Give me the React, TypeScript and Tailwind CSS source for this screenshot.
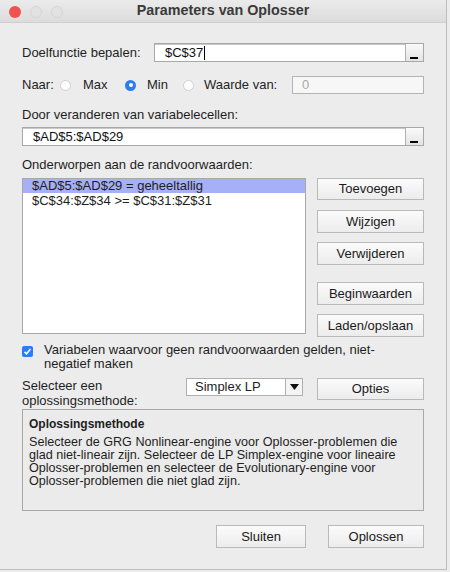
import React from "react";

const font = { fontFamily: '"Liberation Sans", Arial, sans-serif' };

function Btn({ label, className = "" }: { label: string; className?: string }) {
  return (
    <div
      className={`flex items-center justify-center border border-[#b9b9b9] bg-gradient-to-b from-[#fbfbfb] to-[#ececec] text-[13px] text-[#1a1a1a] ${className}`}
    >
      {label}
    </div>
  );
}

function RefInput({ value, cursor = false }: { value: string; cursor?: boolean }) {
  return (
    <div className="flex h-[19px] flex-1 border border-[#a8a8a8] bg-white shadow-[inset_0_1px_0_#c8c8c8]">
      <div className="flex flex-1 items-center pl-[10px] text-[13px] text-[#111]">
        {value}
        {cursor && <span className="ml-[1px] inline-block h-[14px] w-[1px] bg-black" />}
      </div>
      <div className="relative w-[18px] border-l border-[#b0b0b0] bg-gradient-to-b from-[#fafafa] to-[#e4e4e4]">
        <span className="absolute bottom-[2px] left-[4px] h-[2px] w-[8px] bg-black" />
      </div>
    </div>
  );
}

function Radio({ checked = false }: { checked?: boolean }) {
  return checked ? (
    <span className="flex h-[11px] w-[11px] shrink-0 items-center justify-center rounded-full bg-[#2a7df6]">
      <span className="h-[4px] w-[4px] rounded-full bg-white" />
    </span>
  ) : (
    <span className="h-[11px] w-[11px] shrink-0 rounded-full border border-[#d0d0d0] bg-[#fdfdfd]" />
  );
}

export default function App() {
  return (
    <div className="h-[572px] w-[450px] bg-[#ececec]" style={font}>
      <div className="h-[570px] w-[447px] border-r border-b border-[#bdbdbd] bg-[#ececec]">
        {/* Title bar */}
        <div className="relative flex h-[23px] items-center justify-center border-b border-[#cfcfcf] bg-gradient-to-b from-[#ebebeb] to-[#dcdcdc]">
          <div className="absolute left-[9px] top-[6px] flex gap-[9px]">
            <span className="h-[12px] w-[12px] rounded-full bg-[#f0524f]" />
            <span className="h-[12px] w-[12px] rounded-full border border-[#d6d6d6] bg-[#e2e2e2]" />
            <span className="h-[12px] w-[12px] rounded-full border border-[#d6d6d6] bg-[#e2e2e2]" />
          </div>
          <span className="text-[14.3px] font-bold text-[#3a3a3a]">Parameters van Oplosser</span>
        </div>

        <div className="px-[22px] text-[13px] text-[#1e1e1e]">
          {/* Objective */}
          <div className="mt-[20px] flex h-[19px] items-center">
            <span className="w-[132px]">Doelfunctie bepalen:</span>
            <RefInput value="$C$37" cursor />
          </div>

          {/* Naar */}
          <div className="mt-[14px] flex h-[18px] items-center">
            <span className="w-[38px] shrink-0">Naar:</span>
            <Radio />
            <span className="ml-[12px] w-[42px] shrink-0">Max</span>
            <Radio checked />
            <span className="ml-[11px] w-[36px] shrink-0">Min</span>
            <Radio />
            <span className="ml-[10px] w-[88px] shrink-0">Waarde van:</span>
            <div className="flex h-[18px] flex-1 items-center border border-[#b4b4b4] bg-[#f7f7f7] pl-[9px] text-[#a9a9a9]">
              0
            </div>
          </div>

          <div className="mt-[13px] leading-[16px]">Door veranderen van variabelecellen:</div>
          <div className="mt-[4px] flex">
            <RefInput value="$AD$5:$AD$29" />
          </div>

          <div className="mt-[11px] leading-[16px]">Onderworpen aan de randvoorwaarden:</div>

          {/* Constraints list + buttons */}
          <div className="mt-[5px] flex gap-[11px]">
            <div className="h-[156px] w-[284px] border border-[#a8a8a8] bg-white">
              <div className="flex h-[14px] items-center bg-[#a6b0f6] pl-[9px]">$AD$5:$AD$29 = geheeltallig</div>
              <div className="flex h-[15px] items-center pl-[9px]">$C$34:$Z$34 &gt;= $C$31:$Z$31</div>
            </div>
            <div className="flex w-[107px] flex-col">
              <Btn label="Toevoegen" className="h-[22px]" />
              <Btn label="Wijzigen" className="mt-[10px] h-[23px]" />
              <Btn label="Verwijderen" className="mt-[9px] h-[23px]" />
              <Btn label="Beginwaarden" className="mt-[17px] h-[23px]" />
              <Btn label="Laden/opslaan" className="mt-[9px] h-[23px]" />
            </div>
          </div>

          {/* Non-negative checkbox */}
          <div className="mt-[6px] flex">
            <span className="mt-[3px] flex h-[11px] w-[11px] shrink-0 items-center justify-center rounded-[2px] bg-[#2a7df6]">
              <svg width="9" height="9" viewBox="0 0 9 9">
                <path d="M1.5 4.8 L3.6 6.8 L7.5 2" fill="none" stroke="white" strokeWidth="1.6" />
              </svg>
            </span>
            <span className="ml-[11px] leading-[14px]">
              Variabelen waarvoor geen randvoorwaarden gelden, niet-
              <br />
              negatief maken
            </span>
          </div>

          {/* Method */}
          <div className="mt-[7px] flex">
            <div className="w-[164px] leading-[15px]">
              Selecteer een
              <br />
              oplossingsmethode:
            </div>
            <div className="flex h-[18px] w-[117px] border border-[#b0b0b0] bg-white">
              <span className="flex flex-1 items-center pl-[8px]">Simplex LP</span>
              <span className="flex w-[17px] items-center justify-center border-l border-[#b0b0b0] bg-[#f4f4f4]">
                <svg width="9" height="6" viewBox="0 0 9 6">
                  <path d="M0 0 H9 L4.5 6 Z" fill="#111" />
                </svg>
              </span>
            </div>
            <Btn label="Opties" className="ml-[14px] h-[22px] w-[107px]" />
          </div>

          {/* Description */}
          <div className="mt-[1px] h-[102px] border border-[#a8a8a8] bg-[#ebebeb] px-[6px] pt-[7px]">
            <div className="text-[12px] font-bold leading-[15px]">Oplossingsmethode</div>
            <div className="mt-[4px] text-[12.6px] leading-[13px]">
              Selecteer de GRG Nonlinear-engine voor Oplosser-problemen die
              <br />
              glad niet-lineair zijn. Selecteer de LP Simplex-engine voor lineaire
              <br />
              Oplosser-problemen en selecteer de Evolutionary-engine voor
              <br />
              Oplosser-problemen die niet glad zijn.
            </div>
          </div>

          {/* Footer */}
          <div className="mt-[14px] flex justify-end gap-[22px]">
            <Btn label="Sluiten" className="h-[23px] w-[90px]" />
            <Btn label="Oplossen" className="h-[23px] w-[96px]" />
          </div>
        </div>
      </div>
    </div>
  );
}
